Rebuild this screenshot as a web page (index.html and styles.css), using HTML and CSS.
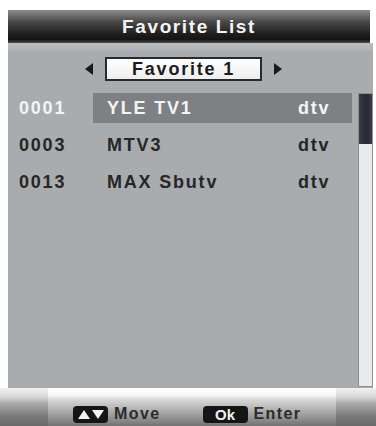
FILE: index.html
```html
<!DOCTYPE html>
<html>
<head>
<meta charset="utf-8">
<link rel="stylesheet" href="styles.css">
</head>
<body>
<div class="screen">
  <div class="panel">
    <div class="title">Favorite List</div>
    <div class="body">
      <div class="selector">
        <span class="arrow arrow-left"></span>
        <div class="favbox">Favorite 1</div>
        <span class="arrow arrow-right"></span>
      </div>
      <div class="content">
        <div class="list">
          <div class="row active">
            <span class="num">0001</span>
            <div class="item"><span class="name">YLE TV1</span><span class="type">dtv</span></div>
          </div>
          <div class="row">
            <span class="num">0003</span>
            <div class="item"><span class="name">MTV3</span><span class="type">dtv</span></div>
          </div>
          <div class="row">
            <span class="num">0013</span>
            <div class="item"><span class="name">MAX Sbutv</span><span class="type">dtv</span></div>
          </div>
        </div>
        <div class="scrollbar"><div class="thumb"></div></div>
      </div>
    </div>
  </div>
  <div class="footer">
    <div class="seg seg-left"></div>
    <div class="help">
      <span class="key key-move"><span class="tri-up"></span><span class="tri-down"></span></span>
      <span class="label">Move</span>
      <span class="key key-ok">Ok</span>
      <span class="label">Enter</span>
    </div>
    <div class="seg seg-right"></div>
  </div>
</div>
</body>
</html>
```

FILE: styles.css
```css
html, body {
  margin: 0;
  padding: 0;
  background: #ffffff;
}
.screen {
  width: 376px;
  height: 426px;
  overflow: hidden;
  display: flex;
  flex-direction: column;
  font-family: "Liberation Sans", Arial, sans-serif;
  font-weight: bold;
}
.panel {
  margin: 10px 3px 0 8px;
  display: flex;
  flex-direction: column;
}
.title {
  height: 33px;
  margin-right: 3px;
  background: linear-gradient(#8c8c8c 0%, #4a4a4a 35%, #1c1c1c 75%, #141414 90%, #505050 100%);
  color: #f4f4f4;
  font-size: 19px;
  letter-spacing: 1.6px;
  display: flex;
  align-items: center;
  justify-content: center;
}
.body {
  height: 345px;
  background: linear-gradient(#bcbfc1 0px, #b0b3b5 7px, #a9acae 8px, #a8abad 100%);
  display: flex;
  flex-direction: column;
}
.selector {
  margin-top: 14px;
  height: 24px;
  display: flex;
  align-items: center;
  padding-left: 77px;
}
.arrow {
  width: 0;
  height: 0;
  border-top: 6px solid transparent;
  border-bottom: 6px solid transparent;
}
.arrow-left {
  border-right: 8px solid #1a1a1a;
  margin-right: 12px;
}
.arrow-right {
  border-left: 8px solid #1a1a1a;
  margin-left: 12px;
}
.favbox {
  width: 153px;
  height: 20px;
  border: 2px solid #2a2a2a;
  background: linear-gradient(#ffffff, #eeeeee);
  color: #1c1c1c;
  font-size: 18px;
  letter-spacing: 1.8px;
  display: flex;
  align-items: center;
  justify-content: center;
}
.content {
  margin-top: 12px;
  display: flex;
  flex: 1;
  padding-bottom: 1px;
}
.list {
  flex: 1;
  display: flex;
  flex-direction: column;
}
.row {
  height: 37px;
  display: flex;
  align-items: flex-start;
  color: #262626;
  font-size: 18px;
  letter-spacing: 1.8px;
}
.num {
  width: 74px;
  padding-left: 11px;
  height: 30px;
  display: flex;
  align-items: center;
}
.item {
  width: 259px;
  height: 30px;
  display: flex;
  align-items: center;
  padding-left: 14px;
  box-sizing: border-box;
}
.name {
  width: 191px;
}
.row.active {
  color: #f4f4f4;
}
.row.active .item {
  background: #7e8184;
}
.scrollbar {
  width: 13px;
  border: 1px solid #8d9093;
  background: #e8ebee;
  margin-left: 5px;
  display: flex;
  flex-direction: column;
}
.thumb {
  height: 50px;
  background: linear-gradient(90deg, #3a3d48, #262833 60%, #3a3d48);
}
.footer {
  flex: 1;
  display: flex;
  background: linear-gradient(#ffffff 0px, #f6f6f6 7px, #d6d6d6 12px, #b0b0b0 22px, #8a8a8a 32px, #747474 100%);
}
.seg {
  width: 48px;
  background: linear-gradient(#f0f0f0 0px, #dcdcdc 8px, #a8a8a8 16px, #7a7a7a 28px, #6a6a6a 100%);
}
.seg-right {
  width: 40px;
}
.help {
  flex: 1;
  display: flex;
  align-items: center;
  padding: 14px 0 0 25px;
  color: #2b2b2b;
  font-size: 16px;
  letter-spacing: 1.4px;
}
.key {
  background: #151515;
  border-radius: 4px;
  height: 17px;
  display: flex;
  align-items: center;
  justify-content: center;
}
.key-move {
  width: 35px;
  gap: 2px;
}
.tri-up {
  width: 0;
  height: 0;
  border-left: 6px solid transparent;
  border-right: 6px solid transparent;
  border-bottom: 9px solid #f2f2f2;
}
.tri-down {
  width: 0;
  height: 0;
  border-left: 6px solid transparent;
  border-right: 6px solid transparent;
  border-top: 9px solid #f2f2f2;
}
.key-ok {
  width: 45px;
  color: #f2f2f2;
  font-size: 15px;
  letter-spacing: 0;
  margin-left: 42px;
}
.label {
  margin-left: 6px;
}
```
